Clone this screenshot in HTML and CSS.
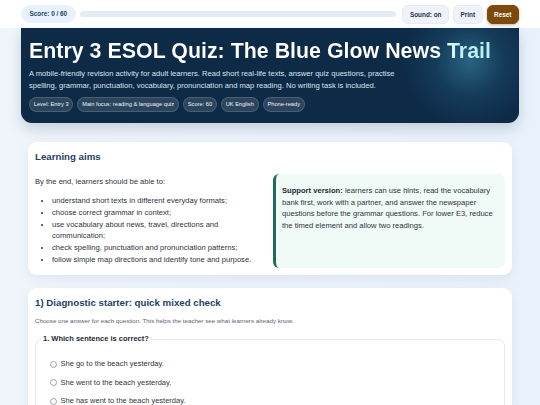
FILE: index.html
```html
<!DOCTYPE html>
<html lang="en">
<head>
<meta charset="utf-8">
<title>Entry 3 ESOL Quiz: The Blue Glow News Trail</title>
<link rel="stylesheet" href="styles.css">
</head>
<body>
<header class="topbar">
  <div class="score-pill">Score: 0 / 60</div>
  <div class="progress"><div class="progress-fill"></div></div>
  <button class="btn">Sound: on</button>
  <button class="btn">Print</button>
  <button class="btn btn-reset">Reset</button>
</header>
<main class="wrap">
  <section class="hero">
    <h1 class="hero-title">Entry 3 ESOL Quiz: The Blue Glow News Trail</h1>
    <p class="hero-desc">A mobile-friendly revision activity for adult learners. Read short real-life texts, answer quiz questions, practise spelling, grammar, punctuation, vocabulary, pronunciation and map reading. No writing task is included.</p>
    <div class="chips">
      <span class="chip">Level: Entry 3</span>
      <span class="chip">Main focus: reading &amp; language quiz</span>
      <span class="chip">Score: 60</span>
      <span class="chip">UK English</span>
      <span class="chip">Phone-ready</span>
    </div>
  </section>

  <section class="card">
    <h2 class="card-title">Learning aims</h2>
    <div class="aims">
      <div class="aims-left">
        <p class="aims-intro">By the end, learners should be able to:</p>
        <ul class="aims-list">
          <li>understand short texts in different everyday formats;</li>
          <li>choose correct grammar in context;</li>
          <li>use vocabulary about news, travel, directions and communication;</li>
          <li>check spelling, punctuation and pronunciation patterns;</li>
          <li>follow simple map directions and identify tone and purpose.</li>
        </ul>
      </div>
      <div class="support">
        <p><strong>Support version:</strong> learners can use hints, read the vocabulary bank first, work with a partner, and answer the newspaper questions before the grammar questions. For lower E3, reduce the timed element and allow two readings.</p>
      </div>
    </div>
  </section>

  <section class="card">
    <h2 class="card-title">1) Diagnostic starter: quick mixed check</h2>
    <p class="card-sub">Choose one answer for each question. This helps the teacher see what learners already know.</p>
    <fieldset class="question">
      <legend>1. Which sentence is correct?</legend>
      <label class="option"><span class="radio"></span>She go to the beach yesterday.</label>
      <label class="option"><span class="radio"></span>She went to the beach yesterday.</label>
      <label class="option"><span class="radio"></span>She has went to the beach yesterday.</label>
    </fieldset>
  </section>
</main>
</body>
</html>
```
FILE: styles.css
```css
* { box-sizing: border-box; }
html, body { margin: 0; padding: 0; }
body {
  font-family: "Liberation Sans", Arial, sans-serif;
  background: linear-gradient(90deg, #f0f5fb 0%, #e9f2fc 100%);
  color: #2b2f36;
  overflow: hidden;
  height: 405px;
}
.topbar {
  display: flex;
  align-items: center;
  gap: 4px;
  height: 28px;
  padding: 0 21px;
  background: #ffffff;
}
.score-pill {
  background: #e8f2fc;
  color: #1d4468;
  font-weight: bold;
  font-size: 6.4px;
  height: 18px;
  line-height: 18px;
  padding: 0 8.5px;
  border-radius: 9px;
  white-space: nowrap;
}
.progress {
  flex: 1;
  height: 6px;
  margin-right: 2px;
  background: #e5ebf2;
  border-radius: 3px;
  overflow: hidden;
}
.progress-fill { width: 0; height: 100%; background: #1d6fb8; }
.btn {
  font-family: inherit;
  font-weight: bold;
  font-size: 6.4px;
  color: #23344a;
  background: #eff3f9;
  border: 1px solid #e6ebf2;
  border-radius: 6px;
  height: 19px;
  padding: 0 6.5px;
  cursor: pointer;
  white-space: nowrap;
}
.btn-reset {
  background: #7b4a0c;
  border-color: #7b4a0c;
  color: #ffffff;
  box-shadow: 0 1px 3px rgba(90, 50, 0, 0.35);
}
.wrap {
  width: 498px;
  margin: 0 auto;
}
.hero {
  background:
    radial-gradient(circle at 90% 35%, rgba(50, 118, 148, 0.75) 0, rgba(32, 86, 120, 0.4) 34px, rgba(13, 42, 70, 0) 68px),
    #0d2a46;
  color: #ffffff;
  padding: 9px 8px 11px;
  border-radius: 0 0 11px 11px;
  box-shadow: 0 6px 14px rgba(15, 42, 71, 0.18);
}
.hero-title {
  margin: 0;
  font-size: 21.4px;
  line-height: 28px;
  font-weight: bold;
  background: linear-gradient(90deg, #ffffff 0%, #ffffff 83%, #c4f0fa 90%, #b3ebf7 100%);
  -webkit-background-clip: text;
  background-clip: text;
  color: transparent;
  white-space: nowrap;
}
.hero-desc {
  margin: 3px 0 0;
  font-size: 7.6px;
  line-height: 12px;
  color: #dbe4ee;
  max-width: 380px;
}
.chips {
  display: flex;
  flex-wrap: wrap;
  gap: 4px;
  margin-top: 5px;
}
.chip {
  font-size: 5.7px;
  line-height: 13px;
  padding: 0 3.8px;
  border-radius: 8px;
  background: rgba(255, 255, 255, 0.13);
  border: 1px solid rgba(255, 255, 255, 0.14);
  color: #eef3f8;
  white-space: nowrap;
}
.card {
  background: #ffffff;
  margin: 19px 7px 0;
  border-radius: 9px;
  padding: 8px 7px 7px;
  box-shadow: 0 4px 12px rgba(40, 70, 110, 0.08);
}
.card + .card { margin-top: 13px; }
.card-title {
  margin: 0;
  font-size: 9.7px;
  line-height: 14px;
  color: #1d3f62;
  font-weight: bold;
}
.aims {
  display: flex;
  align-items: stretch;
  gap: 8px;
  margin-top: 10px;
}
.aims-left { width: 230px; font-size: 7.6px; line-height: 11.7px; color: #2f333a; }
.aims-intro { margin: 2px 0 0; }
.aims-list { margin: 7.5px 0 3px; padding-left: 17px; }
.aims-list li { margin: 0; }
.support {
  flex: 1;
  background: #f0faf7;
  border-left: 3px solid #1e6d5b;
  border-radius: 6px;
  padding: 11px 8px 8px 6px;
  font-size: 7.6px;
  line-height: 11.6px;
  color: #2f333a;
}
.support p { margin: 0; }
.support strong { color: #1f2a33; }
.card-sub {
  margin: 7px 0 0;
  font-size: 6.2px;
  line-height: 8px;
  color: #5a6270;
}
.question {
  margin: 9px 0 0;
  border: 1px solid #e5e9ef;
  border-radius: 7px;
  padding: 4px 5px 10px;
}
.question legend {
  font-size: 7.5px;
  line-height: 10px;
  font-weight: bold;
  color: #1f2730;
  padding: 0 2px;
}
.option {
  display: flex;
  align-items: center;
  gap: 4px;
  font-size: 7.5px;
  line-height: 12px;
  color: #30353c;
  margin: 10px 0 0;
  padding-left: 8.5px;
  height: 12px;
}
.option + .option { margin-top: 6.5px; }
.radio {
  width: 7px;
  height: 7px;
  border: 1px solid #9aa1aa;
  border-radius: 50%;
  background: #fff;
  flex: none;
}
```
